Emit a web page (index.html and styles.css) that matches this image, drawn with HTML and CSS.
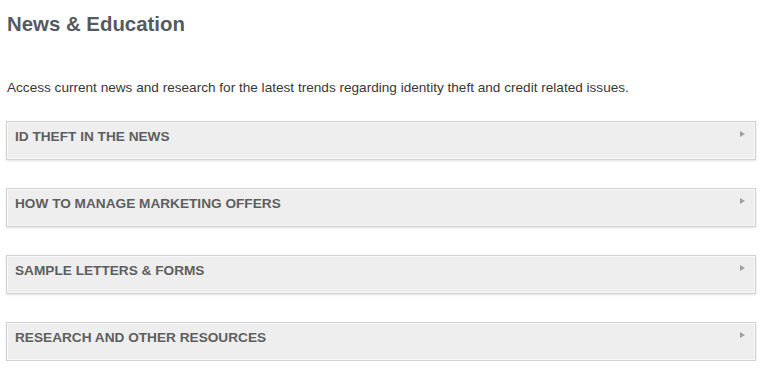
FILE: index.html
```html
<!DOCTYPE html>
<html lang="en">
  <head>
    <meta charset="UTF-8" />
    <meta name="viewport" content="width=device-width, initial-scale=1.0" />
    <title>News &amp; Education</title>
    <link rel="stylesheet" href="styles.css">
  </head>

  <body>
    <div class="main-content">
      <h1>News &amp; Education</h1>
      <p class="intro">Access current news and research for the latest trends regarding identity theft and credit related issues.</p>

      <!-- Accordion -->
      <div class="panel">
        <div class="panel-head">
          <span>ID Theft in the News</span>
          <span class="arrow"></span>
        </div>
      </div>

      <div class="panel">
        <div class="panel-head">
          <span>How to Manage Marketing Offers</span>
          <span class="arrow"></span>
        </div>
      </div>

      <div class="panel">
        <div class="panel-head">
          <span>Sample Letters &amp; Forms</span>
          <span class="arrow"></span>
        </div>
      </div>

      <div class="panel">
        <div class="panel-head">
          <span>Research and Other Resources</span>
          <span class="arrow"></span>
        </div>
      </div>
    </div>
  </body>
</html>
```

FILE: styles.css
```css
* {
  margin: 0;
  padding: 0;
  box-sizing: border-box;
  font-family: "Liberation Sans", Arial, sans-serif;
}

body {
  background-color: #fff;
}

.main-content {
  padding: 12px 12px 0 6px;
}

h1 {
  font-size: 20.4px;
  line-height: 24px;
  font-weight: bold;
  color: #545a61;
  padding-left: 1px;
}

.intro {
  margin-top: 43px;
  font-size: 13.6px;
  line-height: 18px;
  color: #383838;
  padding-left: 1px;
}

.panel {
  margin-top: 24px;
  background-color: #eeeeee;
  border: 1px solid #d2d2d2;
  box-shadow: inset 0 0 0 1px #f8f8f8, 0 1px 2px rgba(0, 0, 0, 0.12);
}

.panel + .panel {
  margin-top: 28px;
}

.panel-head {
  display: flex;
  justify-content: space-between;
  align-items: flex-start;
  padding: 6px 10px 13px 8px;
  font-size: 13.65px;
  line-height: 18px;
  font-weight: bold;
  text-transform: uppercase;
  color: #5e5e5e;
}

.arrow {
  margin-top: 3px;
  width: 0;
  height: 0;
  border-top: 3.5px solid transparent;
  border-bottom: 3.5px solid transparent;
  border-left: 5px solid #a0a0a0;
}
```
